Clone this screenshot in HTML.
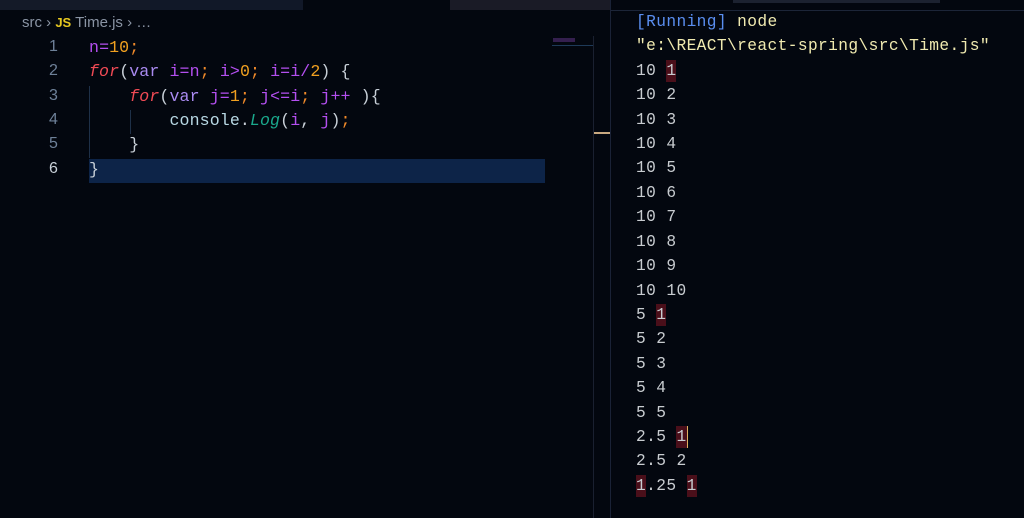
<!DOCTYPE html>
<html><head><style>
body{margin:0;width:1024px;height:518px;background:#03070f;overflow:hidden;position:relative;font-family:"Liberation Mono",monospace}
.a{position:absolute}
.code{font-size:16.6px;letter-spacing:0.1px;color:#c8d0d8}
.ln{position:absolute;left:30px;width:28px;text-align:right;color:#6e8199;font-family:"Liberation Sans",sans-serif;font-size:16px}
.cl{position:absolute;left:89px;white-space:pre}
.p{color:#b44ff0}.n{color:#f0a020}.k{color:#f04a55;font-style:italic}.v{color:#a98af0}.o{color:#f08a2a}.t{color:#1aa88c;font-style:italic}.c{color:#b8d8e4}
.out{position:absolute;left:636px;font-size:16.2px;letter-spacing:0.4px;color:#c8ccd0;white-space:pre}
.h{background:#4a0f1a;padding:2px 0}
</style></head><body>
<div class="a" style="left:0;top:0;width:150px;height:10px;background:#141a28"></div>
<div class="a" style="left:150px;top:0;width:153px;height:10px;background:#111828"></div>
<div class="a" style="left:450px;top:0;width:161px;height:10px;background:#1a1b26"></div>
<div class="a" style="left:733px;top:0;width:207px;height:3px;background:#1c2230"></div>
<div class="a" style="left:611px;top:10px;width:413px;height:1px;background:#1c2538"></div>
<div class="a" style="left:610px;top:0;width:1px;height:518px;background:#1a2236"></div>
<div class="a" style="left:22px;top:14px;font-family:'Liberation Sans',sans-serif;font-size:15px;color:#8a94a4">src › <b style="color:#e8c920;font-size:13px">JS</b> Time.js › …</div>
<div class="a" style="left:89px;top:159px;width:456px;height:24px;background:#0d2448"></div>
<div class="a" style="left:89px;top:86px;width:1px;height:72px;background:#1e3048"></div>
<div class="a" style="left:130px;top:110px;width:1px;height:24px;background:#1e3048"></div>
<div class="a" style="left:552px;top:45px;width:42px;height:1px;background:#1e3a58"></div>
<div class="a" style="left:553px;top:38px;width:22px;height:4px;background:#4a2a6a;opacity:.7"></div>
<div class="a" style="left:593px;top:36px;width:1px;height:482px;background:#1a2030"></div>
<div class="a" style="left:594px;top:132px;width:16px;height:2px;background:#c8a880"></div>
<div class="code">
<div class="ln" style="top:38px">1</div><div class="ln" style="top:62px">2</div><div class="ln" style="top:87px">3</div><div class="ln" style="top:111px">4</div><div class="ln" style="top:135px">5</div><div class="ln" style="top:160px;color:#c8d0d8">6</div>
<div class="cl" style="top:38px"><span class="p">n</span><span class="p">=</span><span class="n">10</span><span class="o">;</span></div>
<div class="cl" style="top:62px"><span class="k">for</span>(<span class="v">var</span> <span class="p">i=n</span><span class="o">;</span> <span class="p">i&gt;</span><span class="n">0</span><span class="o">;</span> <span class="p">i=i/</span><span class="n">2</span>) {</div>
<div class="cl" style="top:87px">    <span class="k">for</span>(<span class="v">var</span> <span class="p">j=</span><span class="n">1</span><span class="o">;</span> <span class="p">j&lt;=i</span><span class="o">;</span> <span class="p">j++</span> ){</div>
<div class="cl" style="top:111px">        <span class="c">console</span>.<span class="t">Log</span>(<span class="p">i</span>, <span class="p">j</span>)<span class="o">;</span></div>
<div class="cl" style="top:135px">    }</div>
<div class="cl" style="top:160px">}</div>
</div>
<div class="out" style="top:13px"><span style="color:#5a8ef0">[Running]</span> <span style="color:#f0eab0">node</span></div>
<div class="out" style="top:37px;color:#f0eab0">"e:\REACT\react-spring\src\Time.js"</div>
<div class="out" style="top:62px">10 <span class="h">1</span></div>
<div class="out" style="top:86px">10 2</div>
<div class="out" style="top:111px">10 3</div>
<div class="out" style="top:135px">10 4</div>
<div class="out" style="top:159px">10 5</div>
<div class="out" style="top:184px">10 6</div>
<div class="out" style="top:208px">10 7</div>
<div class="out" style="top:233px">10 8</div>
<div class="out" style="top:257px">10 9</div>
<div class="out" style="top:282px">10 10</div>
<div class="out" style="top:306px">5 <span class="h">1</span></div>
<div class="out" style="top:330px">5 2</div>
<div class="out" style="top:355px">5 3</div>
<div class="out" style="top:379px">5 4</div>
<div class="out" style="top:404px">5 5</div>
<div class="out" style="top:428px">2.5 <span class="h" style="border-right:1px solid #e0b060">1</span></div>
<div class="out" style="top:452px">2.5 2</div>
<div class="out" style="top:477px"><span class="h">1</span>.25 <span class="h">1</span></div>
</body></html>
